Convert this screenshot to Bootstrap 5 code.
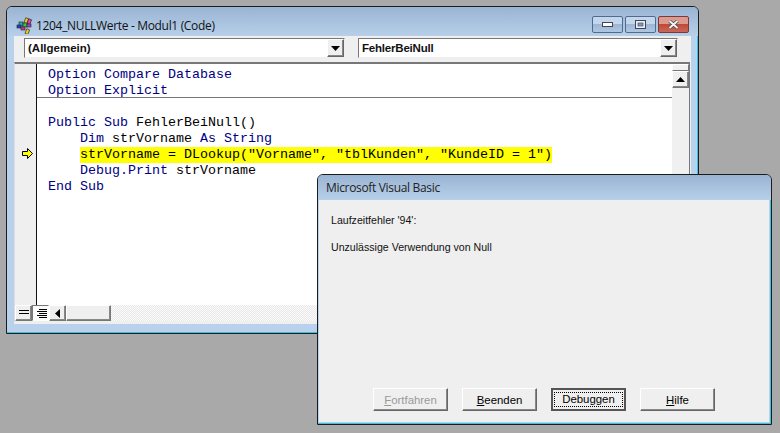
<!DOCTYPE html>
<html lang="de"><head><meta charset="utf-8"><title>VBA</title>
<link href="https://cdn.jsdelivr.net/npm/bootstrap@5.3.0/dist/css/bootstrap.min.css" rel="stylesheet">
<style>
html,body{margin:0;height:433px;overflow:hidden;background:#a9a9a9}
.desk{position:relative;width:780px;height:433px;overflow:hidden;font-family:"Liberation Sans",sans-serif}
.win{position:absolute;background:#b8d1ec;border:1px solid #1c1c1c;border-radius:6px 6px 0 0;box-shadow:inset -1px -1px 0 #35c3e0}
.mainwin{left:6px;top:6px;width:693px;height:328px;padding:0 7px 9px 7px}
.tbar{background:linear-gradient(#99b4d3,#b7cfe9);margin:0 -7px;padding:0 7px;border-radius:5px 5px 0 0}
.mainwin .tbar{height:29px;padding-top:8px}
.wtitle{font-family:"Open Sans",sans-serif;font-size:12px;color:#111;letter-spacing:-.33px;white-space:nowrap}
.capgroup{gap:2px;margin-right:2px;margin-top:-3px}
.capbtn{height:17px;border:1px solid #4f6b8f;border-radius:2px;background:linear-gradient(#c3d6ec 45%,#9cb6d5 50%,#afc7e2)}
.capmin,.capmax,.capx{width:31px}
.capx{border-color:#7a3a36;background:linear-gradient(#dc9a90 45%,#bf4a38 50%,#c9685a)}
.client{background:#efefef;flex:1 1 auto;min-height:0}
.combos{height:26px;padding:2px 12px 4px 10px;gap:13px}
.combo{height:20px;background:#fff;border:1px solid;border-color:#777 #eee #eee #777;font-size:11.5px;font-weight:700;padding-left:3px;line-height:18px;color:#111}
.combo1{width:321px}.combo2{width:320px}
.combo span{flex:1 1 auto}
.combo2 span{letter-spacing:-.2px}
.dropb{width:17px;height:18px;background:#efefef;border:1px solid;border-color:#fff #666 #666 #fff;box-shadow:inset -1px -1px 0 #888}
.panel{flex:1 1 auto;min-height:0;border-top:2px solid #777;border-left:1px solid #ddd;margin-right:1px;border-right:1px solid #777}
.gutter{width:22px;background:#efefef;border-right:1px solid #111;padding-left:7px}
.gutter svg{margin-top:84px}
.code{flex:1 1 auto;background:#fff;padding-top:2px;font-family:"Liberation Mono",monospace;font-size:13.33px;line-height:18px;color:#00007f;white-space:pre;padding-left:11px;min-width:0}
.cline{height:16px;margin-left:-11px;padding-left:11px}
.sepline{border-bottom:1px solid #777;height:16px;margin-left:-11px;padding-left:11px}
.hl{background:linear-gradient(#ff0,#ff0);background-size:100% 16px;background-position:0 1px;background-repeat:no-repeat;padding:1px 0}
.vbar{width:17px;background:#f0f0f0}
.vsplit{height:7px;border:1px solid;border-color:#fff #777 #777 #fff}
.sbtn{background:#efefef;border:1px solid;border-color:#fff #777 #777 #fff;box-shadow:inset -1px -1px 0 #888}
.vup{height:17px}
.hbar{height:16px;background-color:#f4f4f4;background-image:repeating-conic-gradient(#e8e8e8 0 25%,#fbfbfb 0 50%);background-size:2px 2px;margin-bottom:1px}
.hview{width:17px;height:16px;gap:2px}
.hview i{display:block;background:#000;height:1px;width:10px}
.hview-a{padding-bottom:3px}
.hview-a i{height:1px}
.hleft{width:17px;height:16px}
.hthumb{width:45px;height:16px}
.pressed{background:#fbfbfb;border-color:#777 #fff #fff #777;box-shadow:none}
.pressed i:nth-child(odd){width:8px;margin-left:2px}
.footline{height:2px;background:#efefef}
.dlg{left:317px;top:174px;width:455px;height:251px;padding:0 2px 2px 1px}
.dlg .tbar{height:25px;padding-left:8px;margin:0 -2px 0 -1px}
.dlgbody{background:#efefef;font-family:"Liberation Sans",sans-serif;font-size:10.6px;color:#111;padding:14px 0 11px 12px}
.msg1{height:26px;line-height:13px}
.btn.vbbtn{width:75px;height:23px;padding:0;border-radius:0;font-size:11.4px;line-height:20px;color:#000;background:#efefef;border:1px solid;border-color:#fff #666 #666 #fff;font-family:"Liberation Sans",sans-serif;box-shadow:inset -1px -1px 0 #888}
.btn.vbbtn u{text-underline-offset:1px}
.btn.vbbtn.off{color:#9a9a9a;opacity:1}
.btn.vbbtn.foc{border:2px solid #555;line-height:17px;box-shadow:none}
.foc span{display:block;margin:1px;height:15px;line-height:13px;border:1px dotted #000}
.btnrow{margin-right:54px;gap:14px}
</style></head><body>
<div class="desk">
 <div class="win mainwin d-flex flex-column">
  <div class="tbar d-flex align-items-center flex-shrink-0">
   <svg width="17" height="17" viewBox="0 0 17 17" class="flex-shrink-0" style="margin-left:2px;margin-right:3px"><g stroke="#222" stroke-width=".6"><rect x="9" y="1" width="3" height="5" fill="#e8d020" transform="rotate(20 10 3)"/><rect x="12" y="2" width="3" height="5" fill="#e040c0" transform="rotate(20 13 4)"/><rect x="3" y="5" width="4" height="4" fill="#20b0b0"/><rect x="7" y="6" width="4" height="4" fill="#40c040"/><rect x="11" y="7" width="4" height="3" fill="#a040d0"/><rect x="1" y="8" width="4" height="3" fill="#2040d0"/><rect x="5" y="10" width="4" height="3" fill="#d030a0"/><rect x="10" y="12" width="3" height="5" fill="#e8d020" transform="rotate(20 11 14)"/></g></svg>
   <span class="wtitle flex-grow-1">1204_NULLWerte - Modul1 (Code)</span>
   <div class="d-flex capgroup align-items-center">
    <div class="capbtn capmin d-flex align-items-center justify-content-center"><svg width="11" height="6" viewBox="0 0 11 6"><rect x=".5" y="1.5" width="10" height="4" fill="#fff" stroke="#445"/></svg></div>
    <div class="capbtn capmax d-flex align-items-center justify-content-center"><svg width="11" height="9" viewBox="0 0 11 9"><rect x=".5" y=".5" width="10" height="8" fill="#e8eef5" stroke="#445"/><rect x="3" y="3" width="5" height="3" fill="#7f99b8" stroke="#445" stroke-width=".6"/></svg></div>
    <div class="capbtn capx d-flex align-items-center justify-content-center"><svg width="11" height="9" viewBox="0 0 11 9"><path d="M1.5 1 L9.5 8 M9.5 1 L1.5 8" stroke="#444" stroke-width="3.4"/><path d="M1.5 1 L9.5 8 M9.5 1 L1.5 8" stroke="#f4f4f4" stroke-width="2"/></svg></div>
   </div>
  </div>
  <div class="client d-flex flex-column">
   <div class="combos d-flex flex-shrink-0">
    <div class="combo combo1 d-flex"><span>(Allgemein)</span><div class="dropb d-flex align-items-center justify-content-center"><svg width="9" height="5" viewBox="0 0 9 5"><path d="M0 0H9L4.5 5Z" fill="#000"/></svg></div></div>
    <div class="combo combo2 d-flex"><span>FehlerBeiNull</span><div class="dropb d-flex align-items-center justify-content-center"><svg width="9" height="5" viewBox="0 0 9 5"><path d="M0 0H9L4.5 5Z" fill="#000"/></svg></div></div>
   </div>
   <div class="panel d-flex flex-column">
    <div class="d-flex flex-grow-1" style="min-height:0">
     <div class="gutter flex-shrink-0"><svg width="11" height="11" viewBox="0 0 11 11" style="display:block"><path d="M.5 3.5H5.5V.5L10.5 5.5L5.5 10.5V7.5H.5Z" fill="#ff0" stroke="#000"/></svg></div>
     <div class="code"><div class="sepline" style="border:0">Option Compare Database</div><div class="sepline">Option Explicit</div><div class="cline"> </div><div class="cline">Public Sub <span class="text-black">FehlerBeiNull()</span></div><div class="cline">    Dim <span class="text-black">strVorname</span> As String</div><div class="cline">    <span class="hl text-black">strVorname = DLookup("Vorname", "tblKunden", "KundeID = 1")</span></div><div class="cline">    Debug.Print <span class="text-black">strVorname</span></div><div class="cline">End Sub</div></div>
     <div class="vbar flex-shrink-0 d-flex flex-column"><div class="vsplit"></div><div class="sbtn vup d-flex align-items-center justify-content-center"><svg width="9" height="5" viewBox="0 0 9 5"><path d="M0 5H9L4.5 0Z" fill="#000"/></svg></div></div>
    </div>
    <div class="hbar d-flex flex-shrink-0">
     <div class="sbtn hview hview-a d-flex flex-column align-items-center justify-content-center"><i></i><i></i></div>
     <div class="sbtn pressed hview d-flex flex-column justify-content-center ps-1" style="gap:1px"><i></i><i></i><i></i><i></i><i></i></div>
     <div class="sbtn hleft d-flex align-items-center justify-content-center"><svg width="5" height="9" viewBox="0 0 5 9"><path d="M5 0V9L0 4.5Z" fill="#000"/></svg></div>
     <div class="sbtn hthumb"></div>
    </div>
   </div>
   <div class="footline flex-shrink-0"></div>
  </div>
 </div>

 <div class="win dlg d-flex flex-column">
  <div class="tbar d-flex align-items-center flex-shrink-0"><span class="wtitle" style="color:#222">Microsoft Visual Basic</span></div>
  <div class="client dlgbody d-flex flex-column">
   <div class="msg1">Laufzeitfehler '94':</div>
   <div class="flex-grow-1">Unzulässige Verwendung von Null</div>
   <div class="d-flex btnrow justify-content-end">
    <button class="btn vbbtn off" type="button" disabled><u>F</u>ortfahren</button>
    <button class="btn vbbtn" type="button"><u>B</u>eenden</button>
    <button class="btn vbbtn foc" type="button"><span>Debu<u>g</u>gen</span></button>
    <button class="btn vbbtn" type="button"><u>H</u>ilfe</button>
   </div>
  </div>
 </div>
</div>
<script src="https://cdn.jsdelivr.net/npm/bootstrap@5.3.0/dist/js/bootstrap.bundle.min.js"></script>
</body></html>
